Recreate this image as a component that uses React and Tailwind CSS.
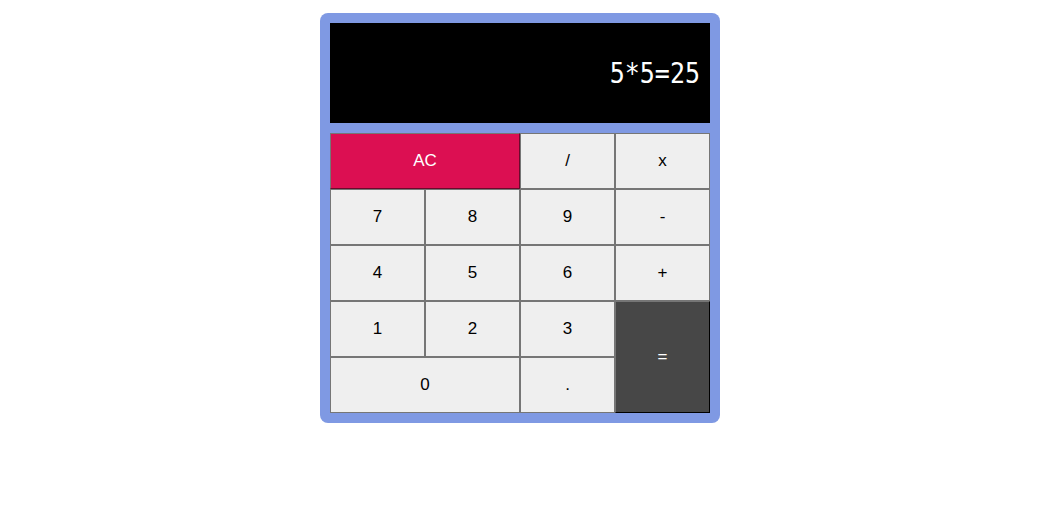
const keys = [
  { label: "AC", cls: "col-span-2 bg-[#dc0f52] text-white border-[#767676] border-r-[#6b0a2c] border-b-[#6b0a2c]" },
  { label: "/" },
  { label: "x" },
  { label: "7" },
  { label: "8" },
  { label: "9" },
  { label: "-" },
  { label: "4" },
  { label: "5" },
  { label: "6" },
  { label: "+" },
  { label: "1" },
  { label: "2" },
  { label: "3" },
  { label: "=", cls: "row-span-2 bg-[#474747] text-white border-[#767676] border-r-black border-b-black" },
  { label: "0", cls: "col-span-2 bg-[#efefef] text-black" },
  { label: "." },
];

export default function App() {
  return (
    <div className="w-full min-h-[525px] bg-white flex justify-center pt-[13px] pr-[1px]">
      <div className="w-[400px] h-[410px] bg-[#7f99e3] rounded-[8px] p-[10px] flex flex-col gap-[10px]">
        <div className="h-[100px] bg-black flex items-center justify-end pr-[10px]">
          <span className="text-white text-[25px] scale-y-[1.15] font-['DejaVu_Sans_Mono',monospace] leading-none">
            5*5=25
          </span>
        </div>
        <div className="grid grid-cols-4 grid-rows-[repeat(5,56px)]">
          {keys.map((k) => (
            <button
              key={k.label}
              className={`border border-[#767676] text-[17px] font-['Liberation_Sans',Arial,sans-serif] flex items-center justify-center ${
                k.cls || "bg-[#efefef] text-black"
              }`}
            >
              {k.label}
            </button>
          ))}
        </div>
      </div>
    </div>
  );
}
